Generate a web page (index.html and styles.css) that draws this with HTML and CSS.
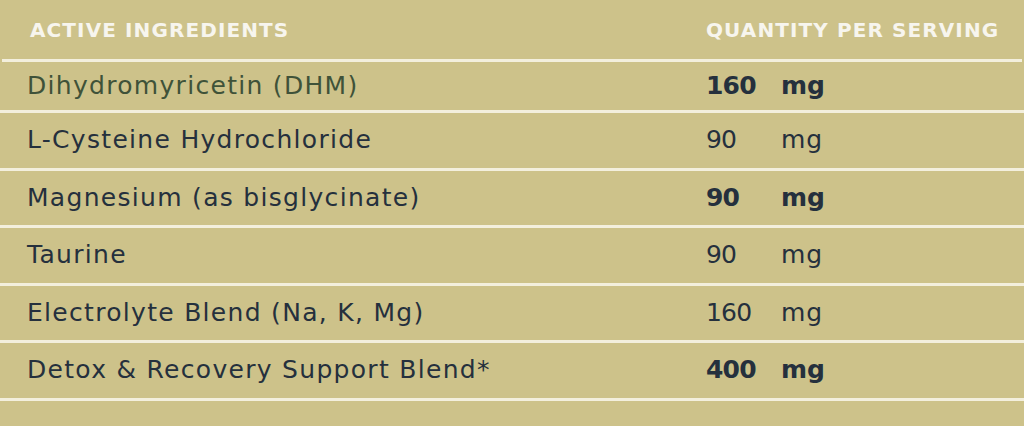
FILE: index.html
```html
<!DOCTYPE html>
<html lang="en">
<head>
<meta charset="utf-8">
<title>Active Ingredients</title>
<link rel="stylesheet" href="styles.css">
</head>
<body>
<div class="panel">
  <div class="head">
    <div class="h-name">Active Ingredients</div>
    <div class="h-qty">Quantity per serving</div>
  </div>
  <div class="row row-first">
    <div class="name name-green">Dihydromyricetin (DHM)</div>
    <div class="amt bold">160</div>
    <div class="unit bold">mg</div>
  </div>
  <div class="row">
    <div class="name">L-Cysteine Hydrochloride</div>
    <div class="amt">90</div>
    <div class="unit">mg</div>
  </div>
  <div class="row">
    <div class="name">Magnesium (as bisglycinate)</div>
    <div class="amt bold">90</div>
    <div class="unit bold">mg</div>
  </div>
  <div class="row">
    <div class="name">Taurine</div>
    <div class="amt">90</div>
    <div class="unit">mg</div>
  </div>
  <div class="row">
    <div class="name">Electrolyte Blend (Na, K, Mg)</div>
    <div class="amt">160</div>
    <div class="unit">mg</div>
  </div>
  <div class="row">
    <div class="name">Detox &amp; Recovery Support Blend*</div>
    <div class="amt bold">400</div>
    <div class="unit bold">mg</div>
  </div>
  <div class="rule"></div>
</div>
</body>
</html>
```
FILE: styles.css
```css
html, body {
  margin: 0;
  padding: 0;
}
body {
  width: 1024px;
  height: 426px;
  overflow: hidden;
  background: #cdc28a;
  font-family: "DejaVu Sans", "Open Sans", sans-serif;
  color: #25303d;
}
.panel {
  display: flex;
  flex-direction: column;
}
.head {
  display: grid;
  grid-template-columns: 706px 1fr;
  height: 59px;
  align-items: center;
  color: #f7f5ee;
  font-weight: 700;
  font-size: 20px;
  text-transform: uppercase;
  letter-spacing: 1.1px;
}
.h-name {
  padding-left: 30px;
}
.row {
  display: grid;
  grid-template-columns: 706px 75px 1fr;
  height: 54.5px;
  border-top: 3px solid #f3efdd;
  align-items: center;
  font-size: 25px;
  line-height: 30px;
}
.row-first {
  height: 48px;
  margin: 0 2px;
  grid-template-columns: 704px 75px 1fr;
}
.row-first .name {
  padding-left: 25px;
}
.name {
  padding-left: 27px;
  letter-spacing: 1.3px;
}
.name-green {
  color: #3f5239;
}
.amt {
  letter-spacing: -0.8px;
}
.unit {
  letter-spacing: 1px;
}
.unit.bold {
  letter-spacing: 0;
}
.bold {
  font-weight: 700;
}
.rule {
  height: 3px;
  background: #f3efdd;
}
```
